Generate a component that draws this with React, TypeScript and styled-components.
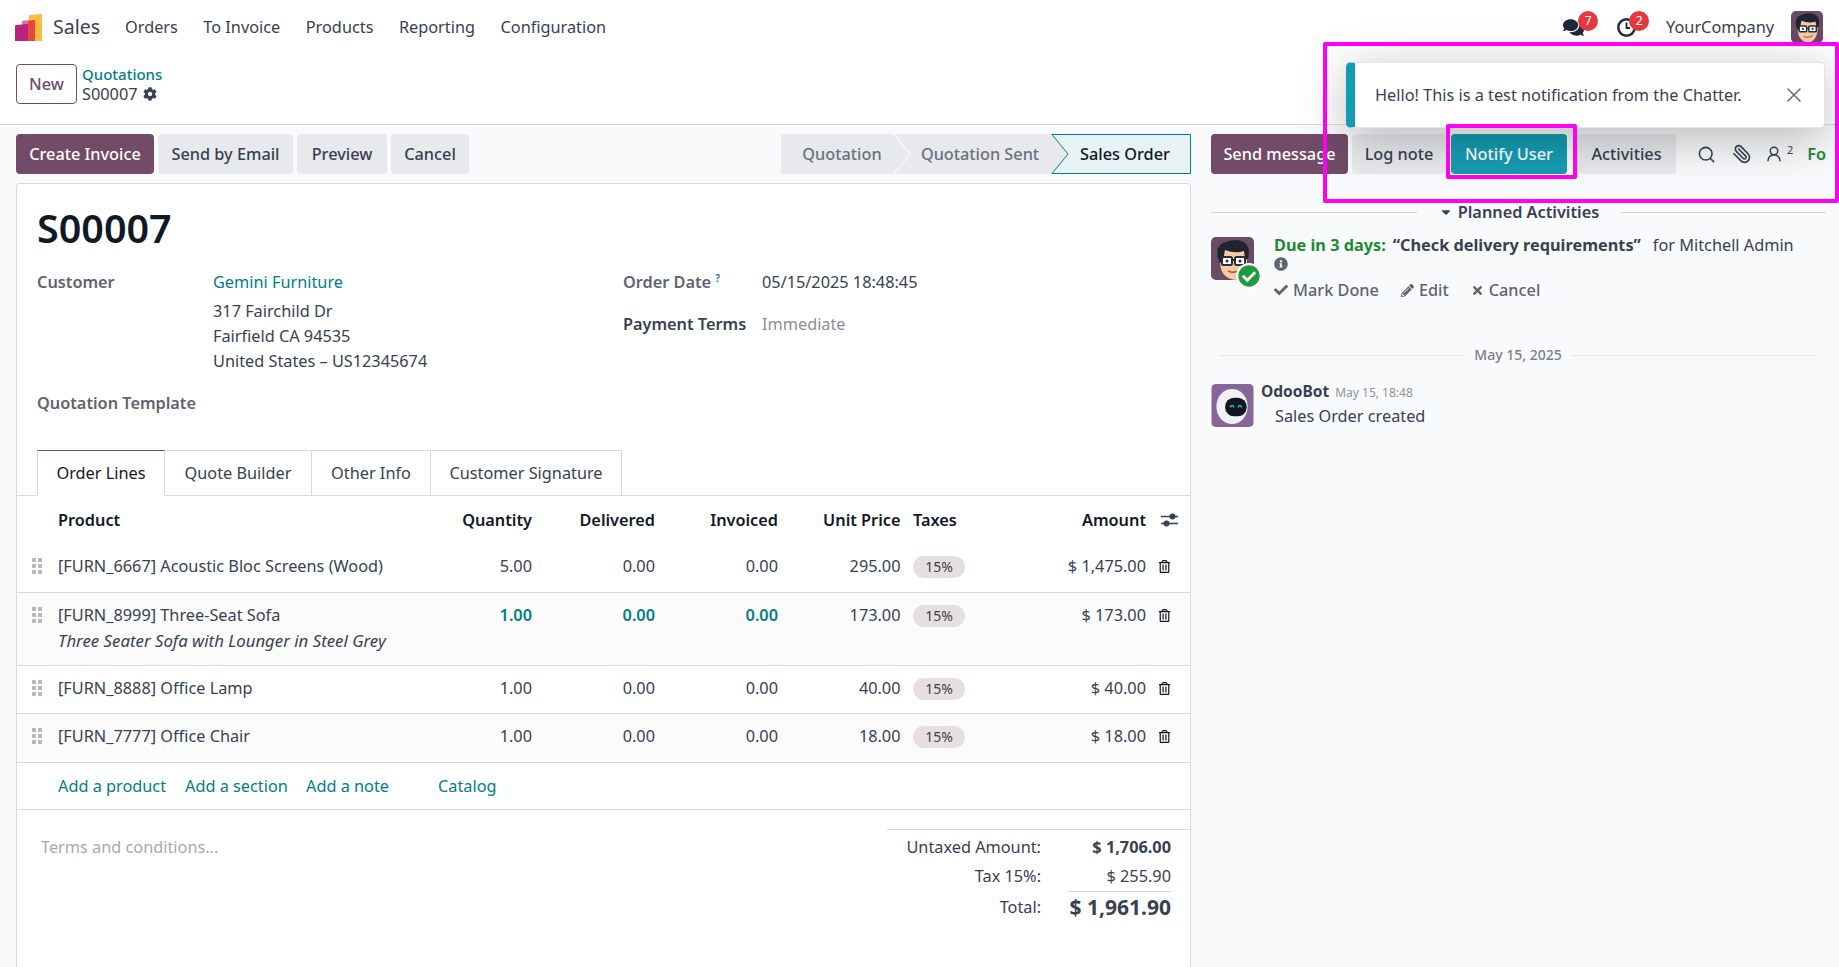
import React from "react"
import styled, { createGlobalStyle } from "styled-components"
import { FaCaretDown, FaCheck, FaCheckCircle, FaCog, FaComments, FaInfoCircle, FaPencilAlt, FaRegTrashAlt, FaTimes } from "react-icons/fa"
import { Paperclip, Search, UserRound, X } from "lucide-react"

const FONT = `"Noto Sans", "Open Sans", sans-serif`
const TEAL = "#017e84"
const PURPLE = "#714b67"
const TEXT = "#374151"
const DARK = "#111827"
const MUTED = "#5f636f"
const LINE = "#d8dadd"
const MAGENTA = "#ff00f0"

const GlobalStyle = createGlobalStyle`
	html, body {
		margin: 0;
		padding: 0;
		background: #f9fafb;
	}

	body {
		font-family: ${FONT};
		font-size: 16.3px;
		line-height: 24px;
		color: ${TEXT};
	}
`

const Page = styled.div`
	position: relative;
	width: 1839px;
	height: 967px;
	overflow: hidden;
	display: flex;
	flex-direction: column;
	background: #f9fafb;
`

const NavBarElement = styled.div`
	height: 46px;
	flex-shrink: 0;
	display: flex;
	flex-direction: row;
	align-items: center;
	background: #ffffff;
	padding: 8px 16px 0 15px;
	box-sizing: border-box;
`

const AppName = styled.span`
	font-size: 19.5px;
	margin: 0 25px 0 11px;
	color: ${TEXT};
`

const NavItem = styled.span`
	color: ${TEXT};
	margin-right: 25.5px;
`

const NavSpacer = styled.div`
	flex-grow: 1;
`

const NavIconBox = styled.div<{ $w: number }>`
	position: relative;
	width: ${props => props.$w}px;
	height: 24px;
	display: flex;
	align-items: center;
	color: #1f2937;
`

const Badge = styled.span<{ $left: number }>`
	position: absolute;
	top: -4px;
	left: ${props => props.$left}px;
	width: 20px;
	height: 20px;
	border-radius: 50%;
	background: #e4393f;
	color: #ffffff;
	font-size: 12px;
	line-height: 20px;
	text-align: center;
`

const CompanyName = styled.span`
	margin: 0 17px 0 0;
	color: ${TEXT};
`

const AvatarFrame = styled.div<{ $size: number }>`
	width: ${props => props.$size}px;
	height: ${props => props.$size}px;
	border-radius: 5px;
	overflow: hidden;
	flex-shrink: 0;

	svg {
		display: block;
		width: 100%;
		height: 100%;
	}
`

const ControlPanel = styled.div`
	height: 79px;
	flex-shrink: 0;
	display: flex;
	flex-direction: row;
	padding: 18px 0 0 16px;
	box-sizing: border-box;
	background: #ffffff;
	border-bottom: 1px solid ${LINE};
`

const NewButton = styled.div`
	width: 61px;
	height: 40px;
	box-sizing: border-box;
	display: flex;
	align-items: center;
	justify-content: center;
	border: 1px solid ${PURPLE};
	border-radius: 4px;
	color: ${PURPLE};
	font-weight: 500;
`

const Breadcrumbs = styled.div`
	margin-left: 5px;
	display: flex;
	flex-direction: column;
	line-height: 20px;
`

const BreadcrumbLink = styled.span`
	color: ${TEAL};
	font-weight: 500;
	font-size: 15px;
`

const BreadcrumbCurrent = styled.span`
	display: flex;
	align-items: center;
	gap: 5px;
	color: ${TEXT};
`

const Main = styled.div`
	flex-grow: 1;
	display: flex;
	flex-direction: row;
	min-height: 0;
`

const FormColumn = styled.div`
	width: 1200px;
	flex-shrink: 0;
	padding: 9px 9px 0 16px;
	box-sizing: border-box;
	display: flex;
	flex-direction: column;
`

const ActionRow = styled.div`
	height: 40px;
	display: flex;
	flex-direction: row;
	flex-shrink: 0;
	margin-bottom: 9px;
`

const ActionButton = styled.div<{ $w: number, $gap?: number, $variant?: "primary" | "info" }>`
	width: ${props => props.$w}px;
	height: 40px;
	margin-right: ${props => props.$gap ?? 4}px;
	flex-shrink: 0;
	display: flex;
	align-items: center;
	justify-content: center;
	border-radius: 4px;
	white-space: nowrap;
	font-weight: 500;
	background: ${props => props.$variant === "primary" ? PURPLE : props.$variant === "info" ? "#169cb2" : "#e7e9ed"};
	color: ${props => props.$variant ? "#ffffff" : TEXT};
`

const ActionSpacer = styled.div`
	flex-grow: 1;
`

const StatusBar = styled.div`
	position: relative;
	width: 410px;
	height: 40px;
	display: flex;
	flex-direction: row;
	align-items: center;

	> svg {
		position: absolute;
		left: 0;
		top: 0;
	}
`

const StatusStep = styled.span<{ $w: number, $active?: boolean }>`
	position: relative;
	width: ${props => props.$w}px;
	flex-shrink: 0;
	text-align: center;
	white-space: nowrap;
	font-weight: 500;
	color: ${props => props.$active ? DARK : "#6b7080"};
`

const Sheet = styled.div`
	flex-grow: 1;
	background: #ffffff;
	border: 1px solid ${LINE};
	border-radius: 4px 4px 0 0;
	border-bottom: none;
	display: flex;
	flex-direction: column;
`

const Title = styled.h1`
	margin: 21px 0 0 20px;
	font-size: 39.5px;
	line-height: 46px;
	font-weight: 600;
	color: ${DARK};
`

const FormGrid = styled.div`
	margin: 19px 0 0 20px;
	height: 145px;
	display: flex;
	flex-direction: row;
`

const FormSide = styled.div<{ $w: number }>`
	width: ${props => props.$w}px;
	display: flex;
	flex-direction: column;
`

const FormRow = styled.div<{ $label: number, $gap?: number }>`
	display: grid;
	grid-template-columns: ${props => props.$label}px 1fr;
	margin-bottom: ${props => props.$gap ?? 0}px;
`

const FormLabel = styled.span<{ $dark?: boolean }>`
	font-weight: 600;
	color: ${props => props.$dark ? TEXT : MUTED};

	sup {
		font-size: 10px;
		line-height: 0;
		color: ${TEAL};
		margin-left: 4px;
	}
`

const LinkText = styled.span`
	color: ${TEAL};
`

const AddressBlock = styled.div`
	margin-top: 5px;
	line-height: 25px;
`

const MutedValue = styled.span`
	color: #8a8f99;
`

const TabBar = styled.div`
	margin-top: 35px;
	height: 46px;
	flex-shrink: 0;
	box-sizing: border-box;
	padding-left: 20px;
	display: flex;
	flex-direction: row;
	border-bottom: 1px solid ${LINE};
`

const Tab = styled.div<{ $w: number, $active?: boolean }>`
	width: ${props => props.$w}px;
	height: 46px;
	box-sizing: border-box;
	display: flex;
	align-items: center;
	justify-content: center;
	border: 1px solid ${LINE};
	border-left: ${props => props.$active ? `1px solid ${LINE}` : "none"};
	border-top-color: ${props => props.$active ? PURPLE : LINE};
	border-bottom-color: ${props => props.$active ? "#ffffff" : LINE};
	color: ${props => props.$active ? DARK : TEXT};
	background: #ffffff;
`

const COLUMNS = "41px 394px 80px 123px 123px 122.5px 12.5px 133px 100px 45px"

const TableRow = styled.div<{ $h: number, $striped?: boolean, $plain?: boolean }>`
	display: grid;
	grid-template-columns: ${COLUMNS};
	height: ${props => props.$h}px;
	box-sizing: border-box;
	padding-top: 10px;
	background: ${props => props.$striped ? "#fbfbfc" : "#ffffff"};
	border-bottom: ${props => props.$plain ? "none" : `1px solid ${LINE}`};
`

const HeaderCell = styled.span<{ $right?: boolean }>`
	margin-top: 2px;
	font-weight: 600;
	color: ${DARK};
	white-space: nowrap;
	text-align: ${props => props.$right ? "right" : "left"};
`

const Cell = styled.span<{ $right?: boolean, $accent?: boolean }>`
	white-space: nowrap;
	text-align: ${props => props.$right ? "right" : "left"};
	color: ${props => props.$accent ? TEAL : TEXT};
	font-weight: ${props => props.$accent ? 600 : 400};
`

const Description = styled.div`
	margin-top: 2px;
	font-style: italic;
	font-size: 16.8px;
`

const DragHandle = styled.div`
	padding: 4px 0 0 15px;
	color: #b6b9bf;

	svg {
		display: block;
	}
`

const TaxBadge = styled.span`
	display: flex;
	align-items: center;
	justify-content: center;
	width: 52px;
	height: 22px;
	margin-top: 2px;
	border-radius: 11px;
	background: #e7dfdf;
	font-size: 14px;
	color: ${TEXT};
`

const IconCell = styled.span<{ $left: number, $top?: number }>`
	display: flex;
	align-items: center;
	height: 24px;
	margin-top: ${props => props.$top ?? 0}px;
	padding-left: ${props => props.$left}px;
	color: ${DARK};
`

const AddRow = styled.div`
	height: 47px;
	flex-shrink: 0;
	box-sizing: border-box;
	padding: 11px 0 0 41px;
	display: flex;
	flex-direction: row;
	border-bottom: 1px solid ${LINE};
`

const AddLink = styled.span<{ $w: number }>`
	width: ${props => props.$w}px;
	color: ${TEAL};
	white-space: nowrap;
`

const FooterRow = styled.div`
	display: flex;
	flex-direction: row;
	justify-content: space-between;
`

const TermsText = styled.span`
	margin: 25px 0 0 24px;
	color: #a6a9b0;
`

const Totals = styled.div`
	width: 303px;
	margin-top: 19px;
	border-top: 1px solid ${LINE};
	box-sizing: border-box;
	padding: 3px 19px 0 0;
	display: grid;
	grid-template-columns: 154px 130px;
`

const TotalLabel = styled.span<{ $last?: boolean }>`
	text-align: right;
	white-space: nowrap;
	line-height: ${props => props.$last ? 30 : 29}px;
`

const TotalValue = styled.span<{ $bold?: boolean, $big?: boolean }>`
	justify-self: end;
	text-align: right;
	white-space: nowrap;
	line-height: ${props => props.$big ? 30 : 29}px;
	font-weight: ${props => props.$bold ? 700 : 400};
	font-size: ${props => props.$big ? "21px" : "inherit"};
`

const TotalLine = styled.div`
	grid-column: 1 / 3;
	justify-self: end;
	width: 103px;
	height: 1px;
	background: ${LINE};
`

const Chatter = styled.div`
	flex-grow: 1;
	min-width: 0;
	padding: 9px 13px 0 11px;
	display: flex;
	flex-direction: column;
`

const ChatterTools = styled.div`
	height: 40px;
	display: flex;
	flex-direction: row;
	align-items: center;
	flex-shrink: 0;
`

const ToolIcon = styled.span<{ $left: number, $flip?: boolean }>`
	display: flex;
	margin-left: ${props => props.$left}px;
	color: ${TEXT};
	transform: ${props => props.$flip ? "scaleX(-1)" : "none"};
`

const FollowerCount = styled.sup`
	font-size: 11px;
	line-height: 0;
	margin: -8px 0 0 4px;
	align-self: center;
`

const FollowLink = styled.span`
	margin-left: 14px;
	color: #1c8a32;
	font-weight: 600;
`

const SectionTitleRow = styled.div`
	margin-top: 26px;
	height: 24px;
	display: flex;
	flex-direction: row;
	align-items: center;
	font-weight: 600;
`

const SectionRule = styled.div<{ $color?: string }>`
	flex-grow: 1;
	height: 1px;
	background: ${props => props.$color ?? "#d3d5d9"};
`

const SectionLabel = styled.span`
	display: flex;
	align-items: center;
	gap: 5px;
	padding: 0 21px 0 22px;
	white-space: nowrap;
`

const ActivityRow = styled.div`
	margin-top: 12px;
	display: flex;
	flex-direction: row;
`

const ActivityAvatar = styled.div`
	position: relative;
	width: 43px;
	height: 43px;
	margin: 1px 20px 0 0;
	flex-shrink: 0;
`

const CheckBadge = styled.span`
	position: absolute;
	right: -8px;
	bottom: -9px;
	width: 26px;
	height: 26px;
	border-radius: 50%;
	background: #ffffff;
	display: flex;
	align-items: center;
	justify-content: center;
	color: #1f9a3c;
`

const ActivityBody = styled.div`
	display: flex;
	flex-direction: column;
	min-width: 0;
`

const ActivityLine = styled.div`
	display: flex;
	flex-direction: row;
	white-space: nowrap;
	line-height: 18px;
	height: 18px;
`

const DueText = styled.span`
	color: #1c8a32;
	font-weight: 700;
	margin-right: 7px;
`

const ActivityName = styled.span`
	font-weight: 700;
	margin-right: 12px;
`

const InfoLine = styled.div`
	display: flex;
	height: 20px;
	align-items: center;
	color: #5f636f;
`

const ActivityActions = styled.div`
	margin-top: 4px;
	display: flex;
	flex-direction: row;
	gap: 22px;
`

const ActivityAction = styled.span`
	display: flex;
	align-items: center;
	gap: 5px;
	font-weight: 500;
	color: #5f636f;

	svg {
		color: #5f636f;
	}
`

const DateRow = styled.div`
	margin: 41px 10px 0 9px;
	display: flex;
	flex-direction: row;
	align-items: center;
	gap: 10px;
	font-weight: 500;
	font-size: 14px;
	color: #7c7f88;
`

const MessageRow = styled.div`
	margin-top: 17px;
	display: flex;
	flex-direction: row;
`

const MessageBody = styled.div`
	margin: -2px 0 0 7px;
	display: flex;
	flex-direction: column;
`

const MessageHead = styled.div`
	display: flex;
	flex-direction: row;
	align-items: baseline;
	gap: 6px;
	height: 18px;
	line-height: 18px;
`

const AuthorName = styled.span`
	font-weight: 700;
	font-size: 15.5px;
`

const MessageDate = styled.span`
	font-size: 12px;
	color: #8f929a;
`

const MessageText = styled.div`
	margin: 4px 0 0 14px;
`

const Toast = styled.div`
	position: absolute;
	top: 62px;
	left: 1346px;
	width: 479px;
	height: 66px;
	box-sizing: border-box;
	display: flex;
	flex-direction: row;
	align-items: center;
	background: #ffffff;
	border: 1px solid #e2e4e8;
	border-left: 9px solid #169cb2;
	border-radius: 5px;
	padding: 0 18px 0 20px;
	box-shadow: 0 10px 50px rgba(0, 0, 0, 0.28);
`

const ToastText = styled.span`
	flex-grow: 1;
	color: ${TEXT};
`

const ToastClose = styled.span`
	display: flex;
	color: #666b75;
`

const Highlight = styled.div<{ $x: number, $y: number, $w: number, $h: number }>`
	position: absolute;
	left: ${props => props.$x}px;
	top: ${props => props.$y}px;
	width: ${props => props.$w}px;
	height: ${props => props.$h}px;
	box-sizing: border-box;
	border: 4px solid ${MAGENTA};
	border-radius: 2px;
`

function SalesLogo() {
	return (
		<svg width="27" height="27" viewBox="0 0 27 27">
			<path d="M14 2 Q14 1 15 1 L27 0 L27 27 L14 27 Z" fill="#fbb945" />
			<path d="M7 7 L20 6 L20 27 L7 27 Z" fill="#e8453c" />
			<path d="M7 7 L13 6.5 L13 11 L7 11 Z" fill="#ea6aa8" />
			<path d="M0 12 Q0 11 1 11 L13 10 L13 27 L0 27 Z" fill="#b5247f" />
		</svg>
	)
}

function ClockIcon() {
	return (
		<svg width="19" height="19" viewBox="0 0 19 19" fill="none" stroke="#1f2937">
			<circle cx="9.5" cy="9.5" r="8.2" strokeWidth="2.4" />
			<path d="M9.5 4.5 V10 H13" strokeWidth="1.8" />
		</svg>
	)
}

function UserAvatar() {
	return (
		<svg viewBox="0 0 43 43">
			<rect width="43" height="43" fill="#6b4a63" />
			<path d="M9 24 Q9 41 24 43 Q35 40 36 24 L33 12 L12 12 Z" fill="#f5cba7" />
			<path d="M7 21 Q4 7 15 5 Q24 1 33 5 Q40 10 37 22 L34 22 L33 14 Q24 17 14 13 L12 24 L9 26 Z" fill="#1f2430" />
			<rect x="11" y="20" width="10" height="8" rx="1.5" fill="#ffffff" stroke="#2b2f3a" strokeWidth="2" />
			<rect x="24" y="20" width="10" height="8" rx="1.5" fill="#ffffff" stroke="#2b2f3a" strokeWidth="2" />
			<path d="M21 23 H24" stroke="#2b2f3a" strokeWidth="2" />
			<circle cx="16" cy="24" r="1.5" fill="#2b2f3a" />
			<circle cx="29" cy="24" r="1.5" fill="#2b2f3a" />
			<path d="M17 34 Q23 37 29 33" stroke="#a8553f" strokeWidth="1.6" fill="none" />
		</svg>
	)
}

function BotAvatar() {
	return (
		<svg viewBox="0 0 43 44">
			<rect width="43" height="44" fill="#86669a" />
			<ellipse cx="21" cy="23" rx="16" ry="18" fill="#f1f1f3" />
			<rect x="14" y="14" width="22" height="19" rx="9" fill="#14161f" />
			<path d="M19 24 Q21 20 23 24 M27 24 Q29 20 31 24" stroke="#1fb5b8" strokeWidth="1.6" fill="none" />
		</svg>
	)
}

function SliderIcon() {
	return (
		<svg width="17" height="14" viewBox="0 0 17 14">
			<path d="M0 3.5 H17 M0 10.5 H17" stroke="#374151" strokeWidth="1.5" />
			<circle cx="11.5" cy="3.5" r="3" fill="#374151" />
			<circle cx="5.5" cy="10.5" r="3" fill="#374151" />
		</svg>
	)
}

function GripIcon() {
	return (
		<svg width="10" height="16" viewBox="0 0 10 16" fill="currentColor">
			<rect x="0" y="0" width="4" height="4" />
			<rect x="6" y="0" width="4" height="4" />
			<rect x="0" y="6" width="4" height="4" />
			<rect x="6" y="6" width="4" height="4" />
			<rect x="0" y="12" width="4" height="4" />
			<rect x="6" y="12" width="4" height="4" />
		</svg>
	)
}

function StatusShape() {
	return (
		<svg width="410" height="40" viewBox="0 0 410 40">
			<path d="M0 0 H113 L129 20 L113 40 H0 Z" fill="#e7e9ed" />
			<path d="M113 0 H271 L287 20 L271 40 H113 L129 20 Z" fill="#e7e9ed" />
			<path d="M113 0 L129 20 L113 40" fill="none" stroke="#ffffff" strokeWidth="1" />
			<path d="M271 0.5 H409.5 V39.5 H271 L287 20 Z" fill="#e6f2f3" stroke="#017e84" strokeWidth="1" />
		</svg>
	)
}

const ORDER_LINES = [
	{ id: "6667", name: "[FURN_6667] Acoustic Bloc Screens (Wood)", qty: "5.00", price: "295.00", amount: "$ 1,475.00", h: 49 },
	{ id: "8999", name: "[FURN_8999] Three-Seat Sofa", description: "Three Seater Sofa with Lounger in Steel Grey", qty: "1.00", price: "173.00", amount: "$ 173.00", h: 73, striped: true, accent: true },
	{ id: "8888", name: "[FURN_8888] Office Lamp", qty: "1.00", price: "40.00", amount: "$ 40.00", h: 48 },
	{ id: "7777", name: "[FURN_7777] Office Chair", qty: "1.00", price: "18.00", amount: "$ 18.00", h: 49, striped: true },
]

function OrderTable() {
	return (
		<>
			<TableRow $h={48} $plain>
				<span />
				<HeaderCell>Product</HeaderCell>
				<HeaderCell $right>Quantity</HeaderCell>
				<HeaderCell $right>Delivered</HeaderCell>
				<HeaderCell $right>Invoiced</HeaderCell>
				<HeaderCell $right>Unit Price</HeaderCell>
				<span />
				<HeaderCell>Taxes</HeaderCell>
				<HeaderCell $right>Amount</HeaderCell>
				<IconCell $left={15} $top={2}><SliderIcon /></IconCell>
			</TableRow>
			{ORDER_LINES.map(line => (
				<TableRow key={line.id} $h={line.h} $striped={line.striped}>
					<DragHandle><GripIcon /></DragHandle>
					<Cell>
						{line.name}
						{line.description ? <Description>{line.description}</Description> : null}
					</Cell>
					<Cell $right $accent={line.accent}>{line.qty}</Cell>
					<Cell $right $accent={line.accent}>0.00</Cell>
					<Cell $right $accent={line.accent}>0.00</Cell>
					<Cell $right>{line.price}</Cell>
					<span />
					<span><TaxBadge>15%</TaxBadge></span>
					<Cell $right>{line.amount}</Cell>
					<IconCell $left={12}><FaRegTrashAlt size={13} /></IconCell>
				</TableRow>
			))}
		</>
	)
}

export default function App() {
	return (
		<Page>
			<GlobalStyle />
			<NavBarElement>
				<SalesLogo />
				<AppName>Sales</AppName>
				<NavItem>Orders</NavItem>
				<NavItem>To Invoice</NavItem>
				<NavItem>Products</NavItem>
				<NavItem>Reporting</NavItem>
				<NavItem>Configuration</NavItem>
				<NavSpacer />
				<NavIconBox $w={54}>
					<FaComments size={21} />
					<Badge $left={15}>7</Badge>
				</NavIconBox>
				<NavIconBox $w={49}>
					<ClockIcon />
					<Badge $left={12}>2</Badge>
				</NavIconBox>
				<CompanyName>YourCompany</CompanyName>
				<AvatarFrame $size={32}><UserAvatar /></AvatarFrame>
			</NavBarElement>
			<ControlPanel>
				<NewButton>New</NewButton>
				<Breadcrumbs>
					<BreadcrumbLink>Quotations</BreadcrumbLink>
					<BreadcrumbCurrent>S00007 <FaCog size={14} /></BreadcrumbCurrent>
				</Breadcrumbs>
			</ControlPanel>
			<Main>
				<FormColumn>
					<ActionRow>
						<ActionButton $w={138} $variant="primary">Create Invoice</ActionButton>
						<ActionButton $w={135}>Send by Email</ActionButton>
						<ActionButton $w={90}>Preview</ActionButton>
						<ActionButton $w={78}>Cancel</ActionButton>
						<ActionSpacer />
						<StatusBar>
							<StatusShape />
							<StatusStep $w={122}>Quotation</StatusStep>
							<StatusStep $w={154}>Quotation Sent</StatusStep>
							<StatusStep $w={136} $active>Sales Order</StatusStep>
						</StatusBar>
					</ActionRow>
					<Sheet>
						<Title>S00007</Title>
						<FormGrid>
							<FormSide $w={586}>
								<FormRow $label={176} $gap={17}>
									<FormLabel>Customer</FormLabel>
									<div>
										<LinkText>Gemini Furniture</LinkText>
										<AddressBlock>
											317 Fairchild Dr<br />
											Fairfield CA 94535<br />
											United States – US12345674
										</AddressBlock>
									</div>
								</FormRow>
								<FormRow $label={176}>
									<FormLabel>Quotation Template</FormLabel>
								</FormRow>
							</FormSide>
							<FormSide $w={500}>
								<FormRow $label={139} $gap={18}>
									<FormLabel>Order Date<sup>?</sup></FormLabel>
									<span>05/15/2025 18:48:45</span>
								</FormRow>
								<FormRow $label={139}>
									<FormLabel $dark>Payment Terms</FormLabel>
									<MutedValue>Immediate</MutedValue>
								</FormRow>
							</FormSide>
						</FormGrid>
						<TabBar>
							<Tab $w={128} $active>Order Lines</Tab>
							<Tab $w={147}>Quote Builder</Tab>
							<Tab $w={119}>Other Info</Tab>
							<Tab $w={191}>Customer Signature</Tab>
						</TabBar>
						<OrderTable />
						<AddRow>
							<AddLink $w={127}>Add a product</AddLink>
							<AddLink $w={121}>Add a section</AddLink>
							<AddLink $w={132}>Add a note</AddLink>
							<AddLink $w={60}>Catalog</AddLink>
						</AddRow>
						<FooterRow>
							<TermsText>Terms and conditions...</TermsText>
							<Totals>
								<TotalLabel>Untaxed Amount:</TotalLabel>
								<TotalValue $bold>$ 1,706.00</TotalValue>
								<TotalLabel>Tax 15%:</TotalLabel>
								<TotalValue>$ 255.90</TotalValue>
								<TotalLine />
								<TotalLabel $last>Total:</TotalLabel>
								<TotalValue $bold $big>$ 1,961.90</TotalValue>
							</Totals>
						</FooterRow>
					</Sheet>
				</FormColumn>
				<Chatter>
					<ChatterTools>
						<ActionButton $w={137} $variant="primary">Send message</ActionButton>
						<ActionButton $w={94} $gap={5}>Log note</ActionButton>
						<ActionButton $w={116} $variant="info" $gap={10}>Notify User</ActionButton>
						<ActionButton $w={99}>Activities</ActionButton>
						<ToolIcon $left={17}><Search size={19} /></ToolIcon>
						<ToolIcon $left={16} $flip><Paperclip size={20} /></ToolIcon>
						<ToolIcon $left={13}><UserRound size={18} /></ToolIcon>
						<FollowerCount>2</FollowerCount>
						<FollowLink>Fo</FollowLink>
					</ChatterTools>
					<SectionTitleRow>
						<SectionRule />
						<SectionLabel><FaCaretDown size={14} /> Planned Activities</SectionLabel>
						<SectionRule />
					</SectionTitleRow>
					<ActivityRow>
						<ActivityAvatar>
							<AvatarFrame $size={43}><UserAvatar /></AvatarFrame>
							<CheckBadge><FaCheckCircle size={22} /></CheckBadge>
						</ActivityAvatar>
						<ActivityBody>
							<ActivityLine>
								<DueText>Due in 3 days:</DueText>
								<ActivityName>“Check delivery requirements”</ActivityName>
								<span>for Mitchell Admin</span>
							</ActivityLine>
							<InfoLine><FaInfoCircle size={14} /></InfoLine>
							<ActivityActions>
								<ActivityAction><FaCheck size={14} /> Mark Done</ActivityAction>
								<ActivityAction><FaPencilAlt size={13} /> Edit</ActivityAction>
								<ActivityAction><FaTimes size={13} /> Cancel</ActivityAction>
							</ActivityActions>
						</ActivityBody>
					</ActivityRow>
					<DateRow>
						<SectionRule $color="#e4e5e8" />
						<span>May 15, 2025</span>
						<SectionRule $color="#e4e5e8" />
					</DateRow>
					<MessageRow>
						<AvatarFrame $size={43}><BotAvatar /></AvatarFrame>
						<MessageBody>
							<MessageHead>
								<AuthorName>OdooBot</AuthorName>
								<MessageDate>May 15, 18:48</MessageDate>
							</MessageHead>
							<MessageText>Sales Order created</MessageText>
						</MessageBody>
					</MessageRow>
				</Chatter>
			</Main>
			<Toast>
				<ToastText>Hello! This is a test notification from the Chatter.</ToastText>
				<ToastClose><X size={24} strokeWidth={1.5} /></ToastClose>
			</Toast>
			<Highlight $x={1323} $y={42} $w={516} $h={161} />
			<Highlight $x={1446} $y={124} $w={131} $h={55} />
		</Page>
	)
}
